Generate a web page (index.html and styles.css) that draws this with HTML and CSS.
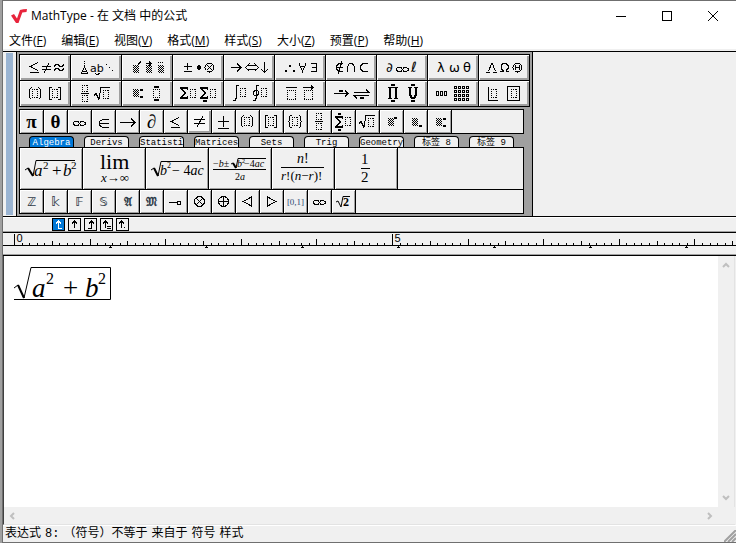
FILE: index.html
```
<!DOCTYPE html>
<html lang="zh-CN">
<head>
    <meta charset="UTF-8">
    <meta name="viewport" content="width=device-width, initial-scale=1.0">
    <title>MathType - 在 文档 中的公式</title>
    <link rel="stylesheet" href="styles.css">
</head>
<body>
    <div class="window">
        <header class="titlebar">
            <svg class="logo" width="18" height="16" viewBox="0 0 18 16">
                <defs>
                    <pattern id="hatch" width="2" height="2" patternUnits="userSpaceOnUse">
                        <path d="M0 0h1v1h-1zM1 1h1v1h-1z" fill="#000" stroke="none"/>
                    </pattern>
                    <g id="slot"><path class="dots" d="M0 .5h6M0 8.5h6M.5 0v9M5.5 0v9"/></g>
                    <g id="slot-s"><path class="dots" d="M0 .5h6M0 6.5h6M.5 0v7M5.5 0v7"/></g>
                    <g id="slot-l"><path class="dots" d="M0 .5h9M0 9.5h9M.5 0v10M8.5 0v10"/></g>
                    <g id="paren"><path d="M3.5 .5l-2 2v8l2 2M10.5 .5l2 2v8l-2 2"/><use href="#slot" x="4" y="2"/></g>
                    <g id="bracket"><path d="M3 .5h-2.5v12h2.5M9 .5h2.5v12h-2.5"/><use href="#slot" x="3" y="2"/></g>
                    <g id="brace"><path d="M3.5 .5h-1l-1 1v4l-1 1l1 1v4l1 1h1M10.5 .5h1l1 1v4l1 1l-1 1v4l-1 1h-1"/><use href="#slot" x="4" y="2"/></g>
                    <g id="frac"><use href="#slot-s" x="1"/><path d="M0 8.5h8"/><use href="#slot-s" x="1" y="10"/></g>
                    <g id="root"><path d="M0 8.5l2-2l3 6l2-12h9"/><use href="#slot" x="9" y="3"/></g>
                    <g id="sigma"><path class="solid" d="M0 0h8v3h-1v-1h-4l3 4-3 4h4v-1h1v3h-8v-1l4-5-4-5z"/></g>
                    <g id="hatchbox"><rect width="6" height="8" fill="url(#hatch)" stroke="none"/></g>
                    <g id="le"><path d="M8 .5L.5 4.5L8 8.5M0 10.5h9"/></g>
                    <g id="ne"><path d="M0 3.5h9M0 6.5h9M7 .5l-5 9"/></g>
                    <g id="inf"><path d="M6.5 2.5l-1.500-2h-3l-2 1.500v1l2 1.500h3l3-4h2.500l2 1.500v1l-2 1.500h-2.500z"/></g>
                </defs>
                <path d="M1 7.5l3-1.5 3 4.5L10 2q3-.8 7-1l-.5 3-4.2.4L8.5 15H6z" fill="#e8243c"/>
            </svg>
            <span class="title">MathType - 在 文档 中的公式</span>
            <div class="window-buttons">
                <button aria-label="最小化"><svg width="10" height="10"><path d="M0 5.5h10"/></svg></button>
                <button aria-label="最大化"><svg width="10" height="10"><path d="M.5 .5h9v9h-9z"/></svg></button>
                <button aria-label="关闭"><svg class="smooth" width="10" height="10"><path d="M0 0l10 10M10 0L0 10"/></svg></button>
            </div>
        </header>
        <nav class="menu">
            <button>文件(<u>F</u>)</button>
            <button>编辑(<u>E</u>)</button>
            <button>视图(<u>V</u>)</button>
            <button>格式(<u>M</u>)</button>
            <button>样式(<u>S</u>)</button>
            <button>大小(<u>Z</u>)</button>
            <button>预置(<u>P</u>)</button>
            <button>帮助(<u>H</u>)</button>
        </nav>

        <div class="tools">
            <div class="grip"></div>
            <div class="panel">
                <!-- symbol and template palettes -->
                <div class="palettes">
                    <button><svg width="50" height="25"><use href="#le" x="10" y="7"/><use href="#ne" x="22" y="8"/><path d="M34 11.5l2-2h2l2 2h2l2-2M34 15.5l2-2h2l2 2h2l2-2"/></svg></button>
                    <button><svg width="50" height="25"><path class="dots" d="M13.5 6v7"/><path d="M13.5 12l-3 6h6zM12 16.5h3M24 18.5l2 1 3-1"/><text x="19" y="17" font-size="11">ab</text><path class="solid" d="M35 9h1v1h-1zM38 12h1v1h-1zM41 15h1v1h-1z"/></svg></button>
                    <button><svg width="50" height="25"><use href="#hatchbox" x="11" y="10"/><path d="M16 9.5l3-3M24 8.5h5M27 6.5l2 2-2 2"/><use href="#hatchbox" x="24" y="10"/><use href="#hatchbox" x="36" y="10"/><path class="solid" d="M36 7h1v1h-1zM38 7h1v1h-1zM40 7h1v1h-1z"/></svg></button>
                    <button><svg width="50" height="25"><path d="M14.5 8v7M11 11.5h8M11 16.5h8"/><path class="solid" d="M24 11h4v3h-4zM25 10h2v5h-2z"/><circle cx="36.5" cy="12.5" r="4.5"/><path d="M33.5 9.5l6 6M39.5 9.5l-6 6"/></svg></button>
                    <button><svg width="50" height="25"><path d="M7 12.5h10M13 8.5l4 4-4 4M24 10.5h8M24 14.5h8M25.5 8.5l-4 4 4 4M30.5 8.5l4 4-4 4M40.5 7v10M37 14l3.5 3.5L44 14"/></svg></button>
                    <button><svg width="50" height="25"><path class="solid" d="M10 15h2v2h-2zM14 10h2v2h-2zM18 15h2v2h-2z"/><path d="M24 8.5l3.5 8 3.5-8M25 11.5h5M36 8.5h5.5v8H36M37 12.5h4"/></svg></button>
                    <button><svg width="50" height="25"><path d="M17 8.5h-4l-2.5 2.5v3l2.5 2.5h4M11 12.5h6M16 6.5l-4 12M21.5 17v-5l2-3.5h3l2 3.5v5M42 8.5h-5l-2.5 2.5v3l2.5 2.5h5"/></svg></button>
                    <button><svg width="50" height="25"><text x="9" y="17" font-size="13">∂</text><use href="#inf" x="19" y="12"/><text x="34" y="17" font-size="14">ℓ</text></svg></button>
                    <button><svg width="50" height="25"><text x="9" y="17" font-size="13">λ</text><text x="21" y="17" font-size="13">ω</text><text x="35" y="17" font-size="13">θ</text></svg></button>
                    <button><svg width="50" height="25"><path d="M9.5 16l3.5-8 3.5 8M7 17.5h4M14 17.5h4M21 16.5h3v-1l-2-2v-3l2-2h3l2 2v3l-2 2v1h3"/><circle cx="38.5" cy="12.5" r="4.5"/><path d="M36 12.5h5M36.5 10v5M40.5 10v5"/></svg></button>
                    <button><svg width="50" height="25"><use href="#paren" x="8" y="6"/><use href="#bracket" x="29" y="6"/></svg></button>
                    <button><svg width="50" height="25"><use href="#frac" x="10" y="4"/><use href="#root" x="23" y="6"/></svg></button>
                    <button><svg width="50" height="25"><use href="#hatchbox" x="11" y="8"/><path class="solid" d="M18 8h3v2h-3zM18 15h3v2h-3zM32 5h5v2h-5zM32 18h5v2h-5z"/><path class="dots" d="M31 8.5h7M31.5 8v9M37.5 8v9M31 16.5h7"/></svg></button>
                    <button><svg width="50" height="25"><use href="#sigma" x="7" y="6"/><use href="#slot" x="17" y="8"/><use href="#sigma" x="27" y="6"/><path class="solid" d="M30 19h4v2h-4z"/><use href="#slot" x="37" y="8"/></svg></button>
                    <button><svg width="50" height="25"><path d="M15 4.5h-2l-1 2v11l-1 2H9M35 4.5h-2l-1 2v11l-1 2h-2"/><circle cx="32" cy="12" r="2.5"/><use href="#slot" x="16" y="7"/><use href="#slot" x="37" y="7"/></svg></button>
                    <button><svg width="50" height="25"><path d="M11 6.5h11M28 6.5h11M36 4.5l2 2-2 2"/><use href="#slot-l" x="12" y="9"/><use href="#slot-l" x="29" y="9"/></svg></button>
                    <button><svg width="50" height="25"><path d="M8 12.5h14M19 9.5l3 3-3 3M28 11.5h15l-3-3M43 14.5H28l3 3"/><path class="solid" d="M13 9h4v2h-4zM34 16h4v2h-4z"/></svg></button>
                    <button><svg width="50" height="25"><path class="bold" d="M13 7v10M19 7v10M33 7v7l2 3h2l2-3V7"/><path d="M11 6.5h10M11 17.5h4M17 17.5h4M31 6.5h4M37 6.5h4"/><path class="solid" d="M14 3h4v2h-4zM14 19h4v2h-4zM34 3h4v2h-4zM34 19h4v2h-4z"/></svg></button>
                    <button><svg width="50" height="25"><path d="M8.5 10.5h2v4h-2zM12.5 10.5h2v4h-2zM16.5 10.5h2v4h-2z"/><path d="M26.5 5.5h2v2h-2zM30.5 5.5h2v2h-2zM34.5 5.5h2v2h-2zM38.5 5.5h2v2h-2zM26.5 9.5h2v2h-2zM30.5 9.5h2v2h-2zM34.5 9.5h2v2h-2zM38.5 9.5h2v2h-2zM26.5 13.5h2v2h-2zM30.5 13.5h2v2h-2zM34.5 13.5h2v2h-2zM38.5 13.5h2v2h-2zM26.5 17.5h2v2h-2zM30.5 17.5h2v2h-2zM34.5 17.5h2v2h-2zM38.5 17.5h2v2h-2z"/></svg></button>
                    <button><svg width="50" height="25"><path d="M9.5 6v13.5H19M28.5 5.5h12v14h-12z"/><use href="#slot" x="12" y="8"/><use href="#slot" x="32" y="8"/></svg></button>
                </div>

                <!-- small symbol bar -->
                <div class="bar symbols">
                    <button class="big-char">π</button>
                    <button class="big-char">θ</button>
                    <button><svg width="23" height="23"><use href="#inf" x="5" y="11"/></svg></button>
                    <button><svg width="23" height="23"><path d="M17 9.5h-6l-3.5 2v4l3.5 2h6M8 13.5h9"/></svg></button>
                    <button><svg width="23" height="23"><path d="M4 12.5h15M15 8.5l4 4-4 4"/></svg></button>
                    <button class="big-char">∂</button>
                    <button><svg width="23" height="23"><use href="#le" x="7" y="7"/></svg></button>
                    <button class="raised"><svg width="23" height="23"><path d="M6 9.5h11M6 13.5h11M15 6l-6 11"/></svg></button>
                    <button><svg width="23" height="23"><path d="M11.5 6v11M6 11.5h11M6 18.5h11"/></svg></button>
                    <button><svg width="23" height="23"><use href="#paren" x="4" y="5"/></svg></button>
                    <button><svg width="23" height="23"><use href="#bracket" x="5" y="5"/></svg></button>
                    <button><svg width="23" height="23"><use href="#brace" x="4" y="5"/></svg></button>
                    <button><svg width="23" height="23"><use href="#frac" x="7" y="3"/></svg></button>
                    <button><svg width="23" height="23"><use href="#sigma" x="3" y="6"/><path class="solid" d="M6 3h3v2h-3zM6 19h3v2h-3z"/><use href="#slot" x="13" y="7"/></svg></button>
                    <button><svg width="23" height="23"><use href="#root" x="3" y="5"/></svg></button>
                    <button><svg width="23" height="23"><use href="#hatchbox" x="8" y="8"/><path class="solid" d="M14 7h3v2h-3z"/></svg></button>
                    <button><svg width="23" height="23"><use href="#hatchbox" x="8" y="8"/><path class="solid" d="M15 15h3v2h-3z"/></svg></button>
                    <button><svg width="23" height="23"><use href="#hatchbox" x="8" y="8"/><path class="solid" d="M15 8h3v2h-3zM15 15h3v2h-3z"/></svg></button>
                </div>

                <div class="tabs">
                    <button class="active">Algebra</button>
                    <button>Derivs</button>
                    <button>Statisti</button>
                    <button>Matrices</button>
                    <button>Sets</button>
                    <button>Trig</button>
                    <button>Geometry</button>
                    <button>标签 8</button>
                    <button>标签 9</button>
                </div>

                <!-- large expressions of the current tab -->
                <div class="bar expressions">
                    <button><svg class="math" width="62" height="41"><path d="M5 22l3-2 5 8 3-15.500h39"/><path class="bold" d="M8 20l5 8"/><g font-size="17"><text class="it" x="14" y="28">a</text><text x="32" y="28">+</text><text class="it" x="43" y="28">b</text></g><g font-size="11"><text x="23" y="21">2</text><text x="51" y="21">2</text></g></svg></button>
                    <button><svg class="math" width="62" height="41"><text x="17" y="21" font-size="22">lim</text><text x="18" y="34" font-size="13"><tspan class="it">x</tspan>→∞</text></svg></button>
                    <button><svg class="math" width="62" height="41"><path d="M5 22l3-2 4 8 3-14.500h40"/><path class="bold" d="M8 20l4 8"/><g font-size="14"><text class="it" x="14" y="27">b</text><text x="26" y="27">− 4<tspan class="it">ac</tspan></text></g><text x="21" y="20" font-size="8">2</text></svg></button>
                    <button><svg class="math" width="62" height="41"><path d="M4 21.500h53M22 16l2-1 3 5 2-9.500h28"/><path class="bold" d="M24 15l3 5"/><g font-size="10"><text x="4" y="19">−<tspan class="it">b</tspan>±</text><text class="it" x="28" y="19">b</text><text x="35" y="19">−4<tspan class="it">ac</tspan></text><text x="26" y="32">2<tspan class="it">a</tspan></text></g><text x="33" y="15" font-size="6">2</text></svg></button>
                    <button><svg class="math" width="62" height="41"><path d="M9 19.5h43"/><g font-size="14"><text x="25" y="15"><tspan class="it">n</tspan>!</text></g><text x="9" y="32" font-size="13"><tspan class="it">r</tspan>!(<tspan class="it">n</tspan>−<tspan class="it">r</tspan>)!</text></svg></button>
                    <button><svg class="math" width="62" height="41"><path d="M26 20.5h9"/><g font-size="15"><text x="26" y="16">1</text><text x="26" y="34">2</text></g></svg></button>
                </div>
                <div class="bar symbols letters">
                    <button>ℤ</button>
                    <button>𝕜</button>
                    <button>𝔽</button>
                    <button>𝕊</button>
                    <button>𝔄</button>
                    <button>𝔐</button>
                    <button><svg width="23" height="23"><path d="M5 12.5h8M13.5 11.5h3v3h-3z"/></svg></button>
                    <button><svg width="23" height="23"><circle cx="11.5" cy="11.5" r="5"/><path d="M8 8l7 7M15 8l-7 7"/></svg></button>
                    <button><svg width="23" height="23"><circle cx="11.5" cy="11.5" r="5"/><path d="M11.5 7v9M7 11.5h9"/></svg></button>
                    <button><svg width="23" height="23"><path d="M15.5 7v9L7 11.5z"/></svg></button>
                    <button><svg width="23" height="23"><path d="M7.5 7v9L16 11.5z"/></svg></button>
                    <button class="interval">[0,1]</button>
                    <button><svg width="23" height="23"><use href="#inf" x="5" y="10"/></svg></button>
                    <button><svg class="math" width="23" height="23"><path d="M4 12l2-1 3 6 2-10.500h7"/><text x="11" y="16" font-size="12">2</text></svg></button>
                </div>
            </div>
        </div>

        <div class="tabstops">
            <button class="active"><svg width="11" height="11"><path d="M5.5 2v7.5H9M3 4.5l2.5-2.5L8 4.5"/></svg></button>
            <button><svg width="11" height="11"><path d="M5.5 2v7M3 4.5l2.5-2.5L8 4.5"/></svg></button>
            <button><svg width="11" height="11"><path d="M6.5 2v7.5H3M4 4.5l2.5-2.5L9 4.5"/></svg></button>
            <button><svg width="11" height="11"><path d="M4.5 2v7M2 4.5l2.5-2.5L7 4.5M6 7.5h4M6 9.5h4"/></svg></button>
            <button><svg width="11" height="11"><path d="M4.5 2v7M2 4.5l2.5-2.5L7 4.5M7 8.5h1"/></svg></button>
        </div>
        <div class="ruler"><svg id="ruler" width="100%" height="22"></svg></div>

        <main class="editor">
            <div class="page">
                <svg class="math formula" width="98" height="35"><path d="M0 22l4-3 6 13L17 1.5h79.500v32H0"/><path class="bold" d="M4 19l6 13"/><g font-size="27"><text class="it" x="18" y="31">a</text><text x="49" y="31">+</text><text class="it" x="71" y="31">b</text></g><g font-size="16"><text x="32" y="18">2</text><text x="84" y="18">2</text></g></svg>
            </div>
            <div class="vscroll">
                <svg width="8" height="6"><path d="M1 5l3-3 3 3"/></svg>
                <svg width="8" height="6"><path d="M1 1l3 3 3-3"/></svg>
            </div>
            <div class="hscroll">
                <svg width="6" height="8"><path d="M5 1L2 4l3 3"/></svg>
                <svg width="6" height="8"><path d="M1 1l3 3-3 3"/></svg>
            </div>
        </main>
        <footer class="status">
            <span>表达式</span> <span>8:</span> <span>（符号）不等于</span> <span>来自于</span> <span>符号</span> <span>样式</span>
            <svg class="resize" width="12" height="12"><path d="M0 12L12 0M4 12l8-8M8 12l4-4"/></svg>
        </footer>
    </div>
    <script src="ruler.js"></script>
</body>
</html>
```
FILE: styles.css
```
* {
    box-sizing: border-box;
}
body {
    margin: 0;
    min-height: 100vh;
    display: flex;
    padding-left: 2px;
    background-color: #a0a0a0;
    font-family: "Open Sans", "Noto Sans CJK SC", sans-serif;
    font-size: 12px;
    color: #000;
}
button {
    margin: 0;
    padding: 0;
    border: none;
    background: none;
    font: inherit;
    color: inherit;
}
svg {
    display: block;
    fill: none;
    stroke: #000;
    shape-rendering: crispEdges;
}
.window {
    flex: 1;
    min-width: 0;
    display: flex;
    flex-direction: column;
    border-top: 1px solid #6f6f6f;
    border-left: 1px solid #6f6f6f;
    border-bottom: 1px solid #6f6f6f;
    background-color: #f0f0f0;
}

/* title and menu */
.titlebar {
    height: 29px;
    display: flex;
    align-items: center;
    padding-left: 7px;
    background-color: #fff;
}
.logo {
    stroke: none;
    shape-rendering: auto;
}
.title {
    margin-left: 3px;
    line-height: 20px;
}
.window-buttons {
    margin-left: auto;
    display: flex;
}
.window-buttons button {
    width: 46px;
    height: 28px;
    display: flex;
    align-items: center;
    justify-content: center;
}
.smooth {
    shape-rendering: auto;
}
.menu {
    height: 19px;
    display: flex;
    gap: 15px;
    padding-left: 6px;
    background-color: #fff;
    line-height: 22px;
}
.menu u {
    text-underline-offset: 1px;
}

/* toolbars */
.tools {
    display: flex;
    margin-top: 2px;
    border-top: 1px solid #000;
    border-bottom: 1px solid #000;
}
.grip {
    width: 13px;
    border: solid #f0f0f0;
    border-width: 1px 3px;
    background-color: #9ab4d2;
}
.panel {
    width: 517px;
    padding: 2px;
    border-left: 1px solid #000;
    border-right: 1px solid #000;
    background-color: #a0a0a0;
}
.palettes {
    display: grid;
    grid-template-columns: repeat(10, 50px);
    grid-auto-rows: 25px;
    gap: 1px;
    width: 511px;
    padding: 1px;
    background-color: #000;
}
.palettes button {
    background-color: #f0f0f0;
    box-shadow: inset 1px 1px #fff, inset -2px -2px #a0a0a0;
}
.dots {
    stroke-dasharray: 1 1;
}
.solid {
    fill: #000;
    stroke: none;
}
.bold {
    stroke-width: 2;
}
svg text {
    fill: #000;
    stroke: none;
    font-family: "DejaVu Sans", sans-serif;
}
.math {
    overflow: visible;
    shape-rendering: auto;
}
.math text {
    font-family: "Liberation Serif", serif;
}
.math .it {
    font-style: italic;
}
.bar {
    display: flex;
    gap: 1px;
    width: 505px;
    border: 1px solid #000;
    background-color: #f0f0f0;
}
.bar button {
    display: flex;
    align-items: center;
    justify-content: center;
    box-shadow: 1px 0 #000, inset 1px 1px #fff, inset -1px -1px #a0a0a0;
}
.symbols {
    height: 25px;
    margin-top: 2px;
}
.symbols button {
    width: 23px;
    height: 23px;
}
.symbols .raised {
    background-color: #f8f8f8;
    box-shadow: 1px 0 #000, inset 1px 1px #fff, inset -2px -2px #a0a0a0;
}
.big-char {
    font-family: "Liberation Serif", serif;
    font-size: 19px;
    font-weight: bold;
}
.expressions {
    height: 43px;
}
.expressions button {
    width: 62px;
}
.letters {
    margin-top: -1px;
    font-family: "DejaVu Sans", "DejaVu Serif", serif;
    font-weight: bold;
    color: #303c48;
}
.letters .interval {
    font-family: "Liberation Serif", serif;
    font-size: 9px;
    font-weight: normal;
    color: #2c4a74;
}
.tabs {
    display: flex;
    gap: 10px;
    margin-top: 2px;
    padding-left: 10px;
}
.tabs button {
    width: 45px;
    height: 11px;
    overflow: hidden;
    border: 1px solid #000;
    border-bottom: none;
    border-radius: 4px 4px 0 0;
    background-color: #f0f0f0;
    font-family: "Liberation Mono", "Noto Sans CJK SC", monospace;
    font-size: 9px;
    line-height: 12px;
    white-space: nowrap;
}
.tabs .active {
    background-color: #0078d7;
    color: #fff;
}

/* tab stops and ruler */
.tabstops {
    display: flex;
    gap: 3px;
    height: 15px;
    padding: 0 0 0 49px;
    border-top: 1px solid #fff;
    border-bottom: 1px solid #a0a0a0;
}
.tabstops button {
    width: 13px;
    height: 13px;
    border: 1px solid #000;
}
.tabstops .active {
    background-color: #0078d7;
}
.tabstops .active svg {
    stroke: #fff;
}
.ruler {
    border-top: 1px solid #000;
    border-bottom: 1px solid #000;
    box-shadow: inset 0 -1px #a0a0a0;
}
.ruler text {
    font-family: "Liberation Sans", sans-serif;
    font-size: 11px;
}

/* document */
.editor {
    flex: 1;
    display: grid;
    grid-template: 1fr 17px / 1fr 17px;
    border-left: 1px solid #404040;
    border-bottom: 1px solid #e3e3e3;
    margin-right: 1px;
}
.page {
    padding: 10px;
    background-color: #fff;
}
.vscroll, .hscroll {
    display: flex;
    align-items: center;
    justify-content: space-between;
}
.vscroll {
    flex-direction: column;
    padding: 6px 0;
    border-right: 1px solid #e3e3e3;
}
.hscroll {
    padding: 0 5px;
}
.vscroll svg, .hscroll svg {
    stroke: #bfbfbf;
    stroke-width: 2;
    shape-rendering: auto;
}
.status {
    display: flex;
    align-items: center;
    gap: 4px;
    height: 17px;
    padding-left: 2px;
    border-top: 1px solid #fff;
    font-family: "Liberation Mono", "Noto Sans CJK SC", monospace;
    line-height: 16px;
}
.resize {
    align-self: flex-end;
    margin-left: auto;
    stroke: #a0a0a0;
    stroke-width: 2;
    shape-rendering: auto;
}
```
FILE: ruler.js
```
const ruler = document.getElementById('ruler');
const origin = 11;   // x of the zero mark
const cm = 75.6;     // width of one unit

function drawRuler() {
    const width = ruler.clientWidth;
    let path = 'M0 12.5H' + width;
    let labels = '';

    for (let i = 0; origin + i * cm / 10 < width; i++) {
        const x = Math.round(origin + i * cm / 10) + 0.5;
        let h = 2;
        if (i % 5 === 0) h = 4;
        if (i % 10 === 0) h = 6;
        if (i % 50 === 0) {
            h = 11;
            labels += '<text x="' + (x + 2) + '" y="9">' + i / 10 + '</text>';
        }
        path += 'M' + x + ' 12v-' + h;
    }

    // default tab stops
    for (let x = origin + 96; x < width; x += 96) {
        path += 'M' + (x - 1) + ' 14.5h3M' + (x + 0.5) + ' 12v3';
    }
    ruler.innerHTML = '<path d="' + path + '"/>' + labels;
}

drawRuler();
window.addEventListener('resize', drawRuler);
```
